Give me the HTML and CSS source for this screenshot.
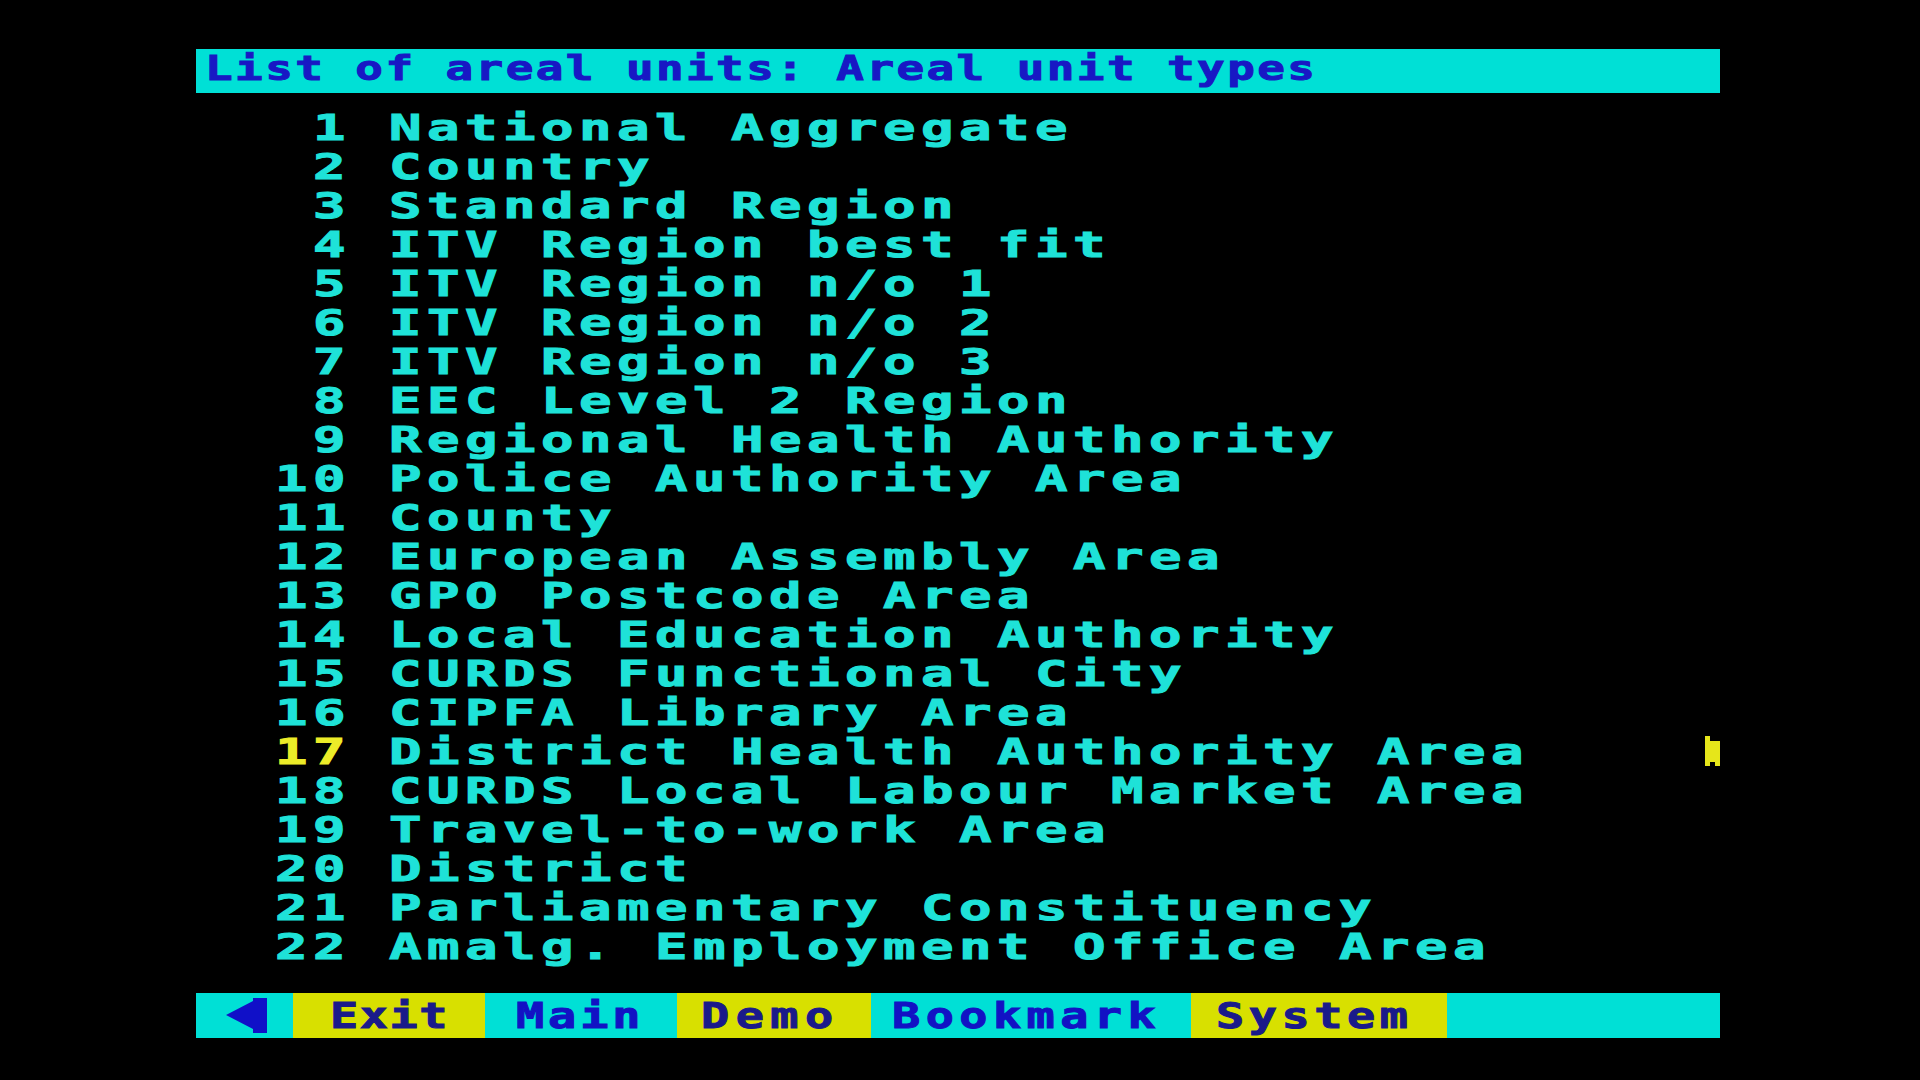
FILE: index.html
```html
<!DOCTYPE html>
<html>
<head>
<meta charset="utf-8">
<link rel="stylesheet" href="styles.css">
</head>
<body>
<div class="screen">
  <div class="title-bar"><span class="title-text">List of areal units: Areal unit types</span></div>
  <ol class="list">
    <li class="row"><span class="txt"> 1 National Aggregate</span></li>
    <li class="row"><span class="txt"> 2 Country</span></li>
    <li class="row"><span class="txt"> 3 Standard Region</span></li>
    <li class="row"><span class="txt"> 4 ITV Region best fit</span></li>
    <li class="row"><span class="txt"> 5 ITV Region n/o 1</span></li>
    <li class="row"><span class="txt"> 6 ITV Region n/o 2</span></li>
    <li class="row"><span class="txt"> 7 ITV Region n/o 3</span></li>
    <li class="row"><span class="txt"> 8 EEC Level 2 Region</span></li>
    <li class="row"><span class="txt"> 9 Regional Health Authority</span></li>
    <li class="row"><span class="txt">10 Police Authority Area</span></li>
    <li class="row"><span class="txt">11 County</span></li>
    <li class="row"><span class="txt">12 European Assembly Area</span></li>
    <li class="row"><span class="txt">13 GPO Postcode Area</span></li>
    <li class="row"><span class="txt">14 Local Education Authority</span></li>
    <li class="row"><span class="txt">15 CURDS Functional City</span></li>
    <li class="row"><span class="txt">16 CIPFA Library Area</span></li>
    <li class="row"><span class="txt"><span class="hl">17</span> District Health Authority Area</span></li>
    <li class="row"><span class="txt">18 CURDS Local Labour Market Area</span></li>
    <li class="row"><span class="txt">19 Travel-to-work Area</span></li>
    <li class="row"><span class="txt">20 District</span></li>
    <li class="row"><span class="txt">21 Parliamentary Constituency</span></li>
    <li class="row"><span class="txt">22 Amalg. Employment Office Area</span></li>
  </ol>
  <div class="menu-bar">
    <div class="seg seg-back cyan">
      <svg class="back-icon" width="41" height="35" viewBox="0 0 41 35"><polygon points="0,17 27,3 27,0 41,0 41,35 27,35 27,31" fill="#1010c8"/></svg>
    </div>
    <div class="seg seg-exit yellow"><span class="btn">Exit</span></div>
    <div class="seg seg-main cyan"><span class="btn">Main</span></div>
    <div class="seg seg-demo yellow"><span class="btn">Demo</span></div>
    <div class="seg seg-book cyan"><span class="btn">Bookmark</span></div>
    <div class="seg seg-sys yellow"><span class="btn">System</span></div>
    <div class="seg seg-fill cyan"></div>
  </div>
  <svg class="pointer" width="15" height="30" viewBox="0 0 15 30"><polygon points="0,0 5,0 5,5 15,5 15,30 10,30 10,26 5,26 5,30 0,30" fill="#e6e61a"/></svg>
</div>
</body>
</html>
```
FILE: styles.css
```css
html, body {
  margin: 0;
  padding: 0;
  background: #000;
}
body {
  width: 1920px;
  height: 1080px;
  overflow: hidden;
  font-family: "DejaVu Sans Mono", "Liberation Mono", monospace;
  font-weight: bold;
}
.screen {
  position: relative;
  width: 1524px;
  margin-left: 196px;
  padding-top: 49px;
}
.title-bar {
  background: #00e0d6;
  height: 38px;
  padding-bottom: 6px;
  line-height: 38px;
  font-size: 34px;
  color: #1818c4;
  padding-left: 9px;
  white-space: pre;
  overflow: hidden;
}
.title-text {
  display: inline-block;
  transform: scaleX(1.35);
  transform-origin: left center;
  letter-spacing: 1.8px;
  -webkit-text-stroke: 1px #1818c4;
}
.list {
  list-style: none;
  margin: 15px 0 0 0;
  padding: 0 0 0 79px;
  font-size: 36px;
  line-height: 39px;
  color: #1ee2d8;
  height: 858px;
}
.row {
  height: 39px;
  white-space: pre;
}
.txt {
  display: inline-block;
  transform: scaleX(1.5);
  transform-origin: left center;
  letter-spacing: 3.66px;
  -webkit-text-stroke: 1px currentColor;
}
.hl {
  color: #ecec28;
}
.menu-bar {
  display: flex;
  margin-top: 27px;
  height: 45px;
  line-height: 45px;
  font-size: 36px;
  color: #1212c4;
}
.seg {
  height: 45px;
  white-space: pre;
  overflow: hidden;
  box-sizing: border-box;
}
.cyan { background: #00e0d6; }
.yellow { background: #d8e000; color: #1a1a8a; }
.btn {
  display: inline-block;
  transform: scaleX(1.3);
  transform-origin: left center;
  letter-spacing: 3px;
  -webkit-text-stroke: 1px currentColor;
}
.seg-back {
  width: 97px;
  display: flex;
  align-items: center;
  padding-left: 30px;
}
.seg-exit { width: 192px; padding-left: 37px; }
.seg-exit .btn { letter-spacing: 1.2px; }
.seg-main { width: 192px; padding-left: 31px; }
.seg-demo { width: 194px; padding-left: 24px; }
.seg-demo .btn { letter-spacing: 5px; }
.seg-book { width: 320px; padding-left: 21px; }
.seg-book .btn { letter-spacing: 4.2px; }
.seg-sys { width: 256px; padding-left: 25px; }
.seg-sys .btn { letter-spacing: 3.5px; }
.seg-fill { flex: 1; }
.pointer {
  position: absolute;
  left: 1509px;
  top: 736px;
}
```
